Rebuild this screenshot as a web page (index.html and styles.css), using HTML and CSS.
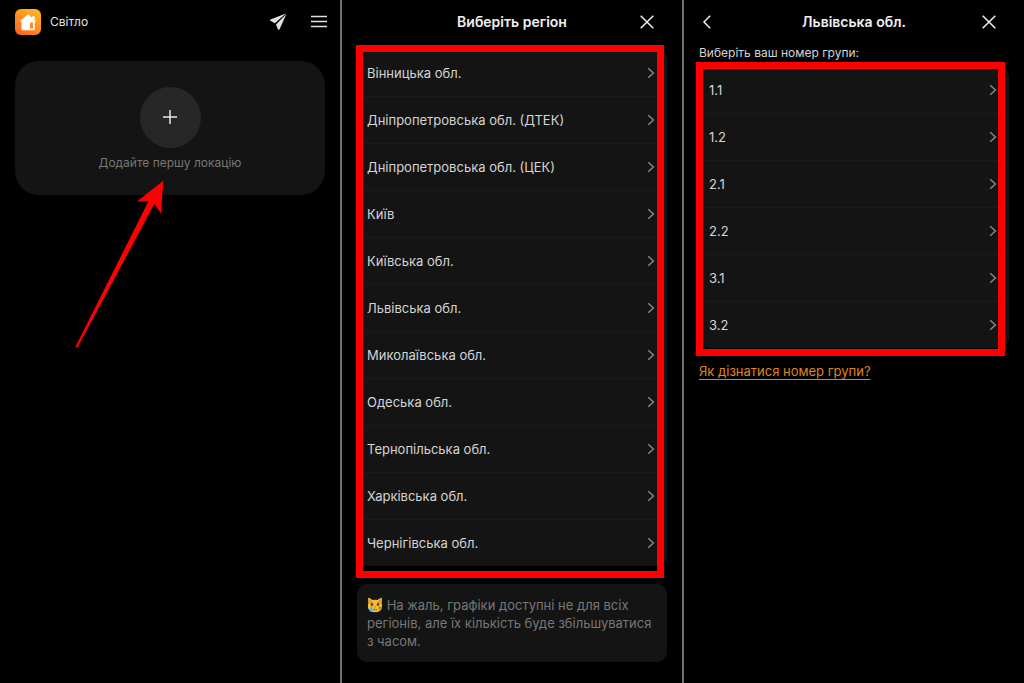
FILE: index.html
```
<!DOCTYPE html>
<html lang="uk">
<head>
<meta charset="utf-8">
<meta name="viewport" content="width=device-width, initial-scale=1">
<title>Світло</title>
<link rel="stylesheet" href="styles.css">
</head>

<body>
<svg class="defs" width="0" height="0" aria-hidden="true">
  <symbol id="chevron" viewBox="0 0 8 12"><path d="M1.2 1.2L6.4 6L1.2 10.8"/></symbol>
  <symbol id="close" viewBox="0 0 16 16"><path d="M1.7 1.7L14.3 14.3M14.3 1.7L1.7 14.3"/></symbol>
</svg>

<div class="screens">

  <!-- головний екран -->
  <section class="screen">
    <header class="bar home">
      <svg class="logo" viewBox="0 0 26 26" aria-hidden="true">
        <defs>
          <linearGradient id="sun" x1="0.8" y1="0" x2="0.2" y2="1">
            <stop offset="0" stop-color="#ffb822"/>
            <stop offset="1" stop-color="#ff6420"/>
          </linearGradient>
        </defs>
        <rect width="26" height="26" rx="6" fill="url(#sun)"/>
        <path fill="#fff" fill-rule="evenodd" d="M12.9 5.6L5.4 11.7Q5.3 12.8 6.5 12.8V20Q6.5 21.2 7.7 21.2H18.6Q19.8 21.2 19.8 20V12.8Q21 12.8 20.7 11.7L19.6 10.8V7.2H17.2V8.9L13.8 5.6Q13.3 5.2 12.9 5.6ZM15 13.6H18V19.6H15Z"/>
      </svg>
      <span class="name">Світло</span>
      <button class="icon send" aria-label="Поділитися">
        <svg width="18" height="18" viewBox="0 0 18 18"><path d="M17 .6L1.4 6.6Q.6 7.2 1.4 7.8L5.8 10.2ZM17.4 1L7 11.4L8.9 16.3Q9.8 17.4 10.6 16.3Z"/></svg>
      </button>
      <button class="icon menu" aria-label="Меню">
        <svg width="18" height="14" viewBox="0 0 18 14"><path d="M1 1.5H17M1 6.5H17M1 11.5H17"/></svg>
      </button>
    </header>
    <div class="card-wrap">
      <button class="card">
        <span class="plus"><svg width="16" height="16" viewBox="0 0 16 16"><path d="M8 1V15M1 8H15"/></svg></span>
        <span>Додайте першу локацію</span>
      </button>
      <svg class="arrow" width="90" height="170" viewBox="0 0 90 170" aria-hidden="true">
        <path d="M88.3 .8L86 33.5L79.3 24L2.3 168L.5 166.8L73.3 21.6L62 21.4Z"/>
      </svg>
    </div>
  </section>

  <!-- вибір регіону -->
  <section class="screen">
    <header class="bar">
      <h2>Виберіть регіон</h2>
      <button class="icon close" aria-label="Закрити"><svg width="16" height="16"><use href="#close"/></svg></button>
    </header>
    <div class="list regions">
      <ul>
        <li><button>Вінницька обл.<svg><use href="#chevron"/></svg></button></li>
        <li><button>Дніпропетровська обл. (ДТЕК)<svg><use href="#chevron"/></svg></button></li>
        <li><button>Дніпропетровська обл. (ЦЕК)<svg><use href="#chevron"/></svg></button></li>
        <li><button>Київ<svg><use href="#chevron"/></svg></button></li>
        <li><button>Київська обл.<svg><use href="#chevron"/></svg></button></li>
        <li><button>Львівська обл.<svg><use href="#chevron"/></svg></button></li>
        <li><button>Миколаївська обл.<svg><use href="#chevron"/></svg></button></li>
        <li><button>Одеська обл.<svg><use href="#chevron"/></svg></button></li>
        <li><button>Тернопільська обл.<svg><use href="#chevron"/></svg></button></li>
        <li><button>Харківська обл.<svg><use href="#chevron"/></svg></button></li>
        <li><button>Чернігівська обл.<svg><use href="#chevron"/></svg></button></li>
      </ul>
      <div class="frame"></div>
    </div>
    <p class="note"><svg class="cat" viewBox="0 0 16 16" aria-hidden="true">
      <path fill="#f5bd35" d="M1.2 .8Q3.6 1 5.4 3Q8 2.3 10.6 3Q12.4 1 14.8 .8Q15.3 3.6 14.6 6Q15.6 8.3 15 11Q13.3 15.3 8 15.3Q2.7 15.3 1 11Q.4 8.3 1.4 6Q.7 3.6 1.2 .8Z"/>
      <path fill="#c98522" d="M2.2 2.2Q3.5 2.6 4.1 3.6L2.4 5ZM13.8 2.2Q12.5 2.6 11.9 3.6L13.6 5Z"/>
      <ellipse cx="5" cy="7.6" rx="1.2" ry="1.3" fill="#463620"/>
      <ellipse cx="11" cy="7.6" rx="1.2" ry="1.3" fill="#463620"/>
      <path fill="none" stroke="#8a5b1a" stroke-width=".8" d="M3 6.2L5.5 5.2M13 6.2L10.5 5.2M6 13Q8 11 10 13M11.5 10.6L15 10M11.5 11.8L14.8 12"/>
      <path fill="#a0522d" d="M7 9.4H9L8 10.5Z"/>
      <path fill="#49b3ee" d="M4.3 9Q6 11.8 5.8 13.2Q5.4 15 4 15Q2.5 14.8 2.6 13.1Q2.9 11.5 4.3 9Z"/>
    </svg> На жаль, графіки доступні не для всіх регіонів, але їх кількість буде збільшуватися з часом.</p>
  </section>

  <!-- вибір групи -->
  <section class="screen">
    <header class="bar">
      <button class="icon back" aria-label="Назад"><svg width="10" height="16" viewBox="0 0 10 16"><path d="M8.2 1.8L2 8L8.2 14.2"/></svg></button>
      <h2>Львівська обл.</h2>
      <button class="icon close" aria-label="Закрити"><svg width="16" height="16"><use href="#close"/></svg></button>
    </header>
    <p class="label">Виберіть ваш номер групи:</p>
    <div class="list groups">
      <ul>
        <li><button>1.1<svg><use href="#chevron"/></svg></button></li>
        <li><button>1.2<svg><use href="#chevron"/></svg></button></li>
        <li><button>2.1<svg><use href="#chevron"/></svg></button></li>
        <li><button>2.2<svg><use href="#chevron"/></svg></button></li>
        <li><button>3.1<svg><use href="#chevron"/></svg></button></li>
        <li><button>3.2<svg><use href="#chevron"/></svg></button></li>
      </ul>
      <div class="frame"></div>
    </div>
    <a class="help" href="#">Як дізнатися номер групи?</a>
  </section>

</div>
</body>
</html>
```
FILE: styles.css
```
*{ margin:0; padding:0; box-sizing:border-box;}
body{ background:#000; color:#d4d4d4; font:13px/18px Inter, "Noto Sans", sans-serif;}
button{ border:0; background:none; color:inherit; font:inherit; cursor:pointer;}
ul{ list-style:none;}
svg{ display:block; fill:none; stroke:currentColor; stroke-width:1.5;}
.defs{ position:absolute;}

.screens{ display:grid; grid-template-columns:repeat(3, 1fr); gap:2px; min-height:100vh; background:#707070;}
.screen{ background:#000; padding:0 15px;}

/* header */
.bar{ display:grid; grid-template-columns:30px 1fr 30px; align-items:center; height:43px; color:#f0f0f0;}
.bar h2{ grid-column:2; font-size:14px; font-weight:600; text-align:center;}
.bar .close{ grid-column:3; justify-self:start; padding-left:2px;}
.bar .back{ justify-self:start; padding-left:3px;}
.home{ display:flex; color:#e0e0e0;}
.logo{ width:26px; height:26px; stroke:none;}
.name{ margin-left:9px; font-size:12px;}
.send{ margin-left:auto;}
.send svg{ fill:currentColor; stroke:none;}
.menu{ margin:0 -3px 0 23px;}

/* add location */
.card-wrap{ position:relative; margin-top:18px;}
.card{ display:flex; flex-direction:column; align-items:center; justify-content:center; gap:6px; width:100%; height:134px; padding-top:2px; border-radius:24px; background:#141414; color:#777; font-size:12px;}
.plus{ display:flex; align-items:center; justify-content:center; width:61px; height:61px; border-radius:50%; background:#272727; color:#e8e8e8;}
.arrow{ position:absolute; left:60px; top:119px; fill:#f00; stroke:none; pointer-events:none;}

/* lists */
.list{ position:relative;}
.list ul{ border-radius:10px; background:#141414; overflow:hidden;}
.list li + li{ border-top:1px solid #1b1b1b;}
.list li{ height:47px;}
.list button{ display:flex; align-items:center; justify-content:space-between; width:100%; height:100%; padding:0 12px 0 10px; text-align:left;}
.list button svg{ width:8px; height:12px; color:#858585;}
.regions{ margin-top:6px;}
.frame{ position:absolute; top:-4px; right:3px; bottom:-12px; left:-1px; border:7px solid #f00; pointer-events:none;}
.groups .frame{ top:-4px; right:4px; bottom:-8px; left:-3px;}

.note{ margin-top:18px; padding:12px 10px; border-radius:10px; background:#141414; color:#777;}
.cat{ display:inline-block; width:16px; height:16px; vertical-align:-3px; stroke:none;}

.label{ font-size:12px; line-height:20px;}
.groups{ margin-top:3px;}
.help{ display:inline-block; margin-top:14px; color:#de861c; text-decoration:underline; text-underline-offset:3px;}
```
